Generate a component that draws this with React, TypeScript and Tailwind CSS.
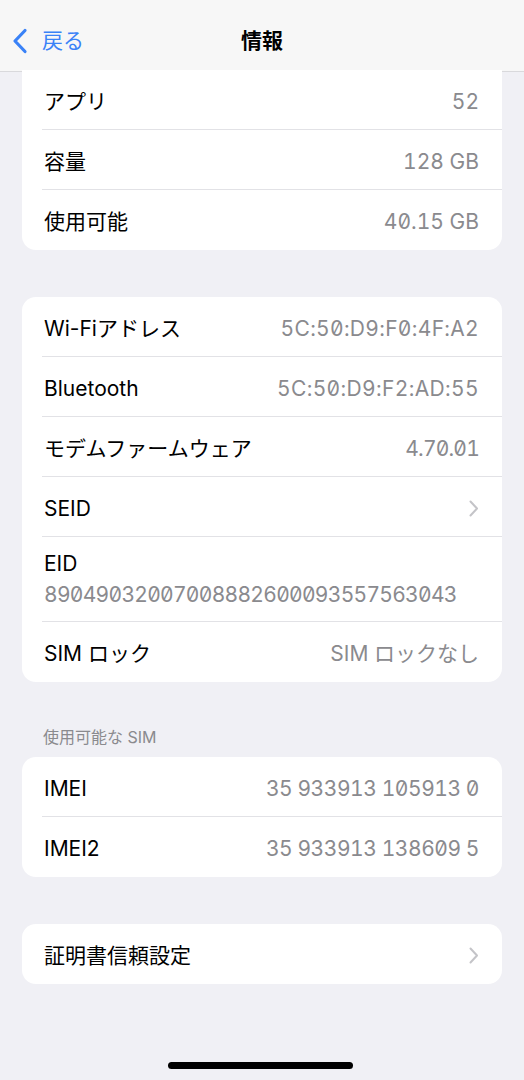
import React from "react";

type Row = {
  label: string;
  value?: string;
  chevron?: boolean;
  stacked?: boolean;
  track?: string;
};

const sans = "font-['Inter','Noto_Sans_CJK_JP',sans-serif]";

const storage: Row[] = [
  { label: "アプリ", value: "52" },
  { label: "容量", value: "128 GB" },
  { label: "使用可能", value: "40.15 GB" },
];

const network: Row[] = [
  { label: "Wi-Fiアドレス", value: "5C:50:D9:F0:4F:A2", track: "tracking-[0.3px]" },
  { label: "Bluetooth", value: "5C:50:D9:F2:AD:55", track: "tracking-[0.35px]" },
  { label: "モデムファームウェア", value: "4.70.01", track: "tracking-[-0.8px]" },
  { label: "SEID", chevron: true },
  {
    label: "EID",
    value: "89049032007008882600093557563043",
    stacked: true,
    track: "tracking-[-0.72px]",
  },
  { label: "SIM ロック", value: "SIM ロックなし" },
];

const sims: Row[] = [
  { label: "IMEI", value: "35 933913 105913 0", track: "tracking-[-0.45px]" },
  { label: "IMEI2", value: "35 933913 138609 5", track: "tracking-[-0.45px]" },
];

const Chevron = () => (
  <svg width="10" height="17" viewBox="0 0 10 17" fill="none">
    <path
      d="M1.5 1.5 L8 8.5 L1.5 15.5"
      stroke="#c4c4c8"
      strokeWidth="2"
      strokeLinecap="round"
      strokeLinejoin="round"
    />
  </svg>
);

function ListRow({ row, last }: { row: Row; last: boolean }) {
  const valueCls = `text-[#8a8a8e] tabular-nums slashed-zero ${row.track ?? ""}`;
  return (
    <div className="relative">
      {row.stacked ? (
        <div className="pl-[22px] pr-[23px] pt-[11px] pb-[11px]">
          <div className="h-[31px] flex items-center text-black">{row.label}</div>
          <div className={`h-[32px] flex items-center ${valueCls}`}>{row.value}</div>
        </div>
      ) : (
        <div className="h-[60px] pt-[3px] flex items-center justify-between pl-[22px] pr-[23px]">
          <span className="text-black">{row.label}</span>
          {row.chevron ? <Chevron /> : <span className={valueCls}>{row.value}</span>}
        </div>
      )}
      {!last && <div className="absolute bottom-0 left-[20px] right-0 h-px bg-[#e2e2e6]" />}
    </div>
  );
}

function Card({ rows, className = "" }: { rows: Row[]; className?: string }) {
  return (
    <div className={`mx-[22px] bg-white overflow-hidden ${className}`}>
      {rows.map((r, i) => (
        <ListRow key={r.label} row={r} last={i === rows.length - 1} />
      ))}
    </div>
  );
}

export default function App() {
  return (
    <div className={`min-h-[1080px] bg-[#f0f0f5] text-[21px] ${sans} flex flex-col relative`}>
      {/* nav bar */}
      <div className="h-[72px] pt-[11px] bg-[#f7f7f7] border-b border-[#d9d9dc] grid grid-cols-[1fr_auto_1fr] items-center">
        <div className="flex items-center gap-[14px] pl-[12px] text-[#3a82f7]">
          <svg width="16" height="26" viewBox="0 0 16 26" fill="none">
            <path
              d="M13 2.5 L3 13 L13 23.5"
              stroke="#3a82f7"
              strokeWidth="3.2"
              strokeLinecap="round"
              strokeLinejoin="round"
            />
          </svg>
          <span>戻る</span>
        </div>
        <div className="font-semibold text-black">情報</div>
        <div />
      </div>

      <div className="-mt-[2px]">
        <Card rows={storage} className="rounded-b-[14px]" />
      </div>

      <Card rows={network} className="rounded-[14px] mt-[47px]" />

      <div className="mt-[44px] pl-[43px] h-[22px] flex items-center text-[16px] text-[#8a8a8e]">
        使用可能な SIM
      </div>
      <Card rows={sims} className="rounded-[14px] mt-[9px]" />

      <div className="mt-[47px] mx-[22px] bg-white rounded-[14px] h-[60px] pt-[3px] flex items-center justify-between pl-[22px] pr-[23px]">
        <span className="text-black">証明書信頼設定</span>
        <Chevron />
      </div>

      <div className="absolute left-[168px] top-[1062px] w-[185px] h-[7px] rounded-full bg-black" />
    </div>
  );
}
